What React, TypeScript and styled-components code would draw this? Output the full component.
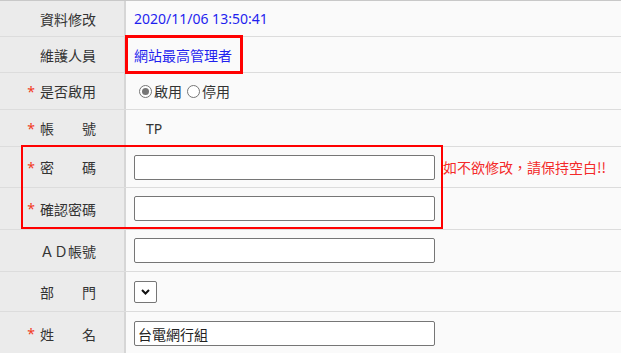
import React from 'react';
import styled, { createGlobalStyle } from 'styled-components';

const Global = createGlobalStyle`
  html, body { margin: 0; padding: 0; background: #fafafa; }
  body {
    font-family: "Noto Sans", "Noto Sans CJK TC", sans-serif;
    font-size: 14px;
    color: #333;
  }
  * { box-sizing: border-box; }
`;

const Page = styled.div`
  position: relative;
  width: 621px;
  height: 353px;
  overflow: hidden;
  background: #fafafa;
`;

const Form = styled.div`
  border-top: 1px solid #c8c8c8;
`;

const Row = styled.div<{ $h: number }>`
  display: grid;
  grid-template-columns: 126px 1fr;
  height: ${(p) => p.$h}px;
  border-bottom: 1px solid #dcdcdc;
`;

const Label = styled.div`
  display: flex;
  align-items: center;
  justify-content: flex-end;
  padding-right: 28px;
  background: #ebebeb;
  border-right: 2px solid #d6d6d6;
  font-family: "Noto Sans CJK TC", sans-serif;
  color: #333;
  white-space: pre;
`;

const Star = styled.span`
  color: #f23a1e;
  margin-right: 5px;
  font-family: "Noto Sans", sans-serif;
`;

const Value = styled.div`
  display: flex;
  align-items: center;
  padding-left: 8px;
  gap: 8px;
`;

const Link = styled.span`
  color: #1f1fef;
`;

const Plain = styled.span<{ $indent?: number }>`
  color: #333;
  margin-left: ${(p) => p.$indent ?? 0}px;
`;

const Hint = styled.span`
  color: #f42a2a;
  font-family: "Noto Sans CJK TC", sans-serif;
`;

const TextInput = styled.input`
  width: 301px;
  height: 25px;
  border: 1px solid #767676;
  border-radius: 2px;
  background: #fff;
  padding: 0 3px;
  font-family: "Noto Sans CJK TC", sans-serif;
  font-size: 14px;
  color: #222;
  outline: none;
`;

const RadioGroup = styled.label`
  display: flex;
  align-items: center;
  font-family: "Noto Sans CJK TC", sans-serif;
  color: #333;
`;

const Radio = styled.input`
  appearance: none;
  width: 13px;
  height: 13px;
  margin: 0 2px 0 5px;
  border: 1px solid #767676;
  border-radius: 50%;
  background: #fff;
  display: grid;
  place-items: center;
  &:checked::after {
    content: "";
    width: 7px;
    height: 7px;
    border-radius: 50%;
    background: #767676;
  }
`;

const SelectWrap = styled.div`
  position: relative;
  width: 23px;
  height: 22px;
`;

const Select = styled.select`
  appearance: none;
  width: 23px;
  height: 22px;
  border: 1px solid #767676;
  border-radius: 2px;
  background: #fff;
`;

const Chevron = styled.svg`
  position: absolute;
  left: 7px;
  top: 8px;
  pointer-events: none;
`;

const Mark = styled.div<{ $l: number; $t: number; $w: number; $h: number; $b: number }>`
  position: absolute;
  left: ${(p) => p.$l}px;
  top: ${(p) => p.$t}px;
  width: ${(p) => p.$w}px;
  height: ${(p) => p.$h}px;
  border: ${(p) => p.$b}px solid #ff0000;
  pointer-events: none;
`;

const FieldLabel: React.FC<{ required?: boolean; text: string }> = ({ required, text }) => (
  <Label>
    {required && <Star>*</Star>}
    {text}
  </Label>
);

export default function App() {
  return (
    <Page>
      <Global />
      <Form>
        <Row $h={36}>
          <FieldLabel text="資料修改" />
          <Value>
            <Link>2020/11/06 13:50:41</Link>
          </Value>
        </Row>
        <Row $h={36}>
          <FieldLabel text="維護人員" />
          <Value>
            <Link>網站最高管理者</Link>
          </Value>
        </Row>
        <Row $h={37}>
          <FieldLabel required text="是否啟用" />
          <Value>
            <RadioGroup>
              <Radio type="radio" name="enable" defaultChecked />
              啟用
            </RadioGroup>
            <RadioGroup style={{ marginLeft: -8 }}>
              <Radio type="radio" name="enable" />
              停用
            </RadioGroup>
          </Value>
        </Row>
        <Row $h={37}>
          <FieldLabel required text={'帳\u3000\u3000號'} />
          <Value>
            <Plain $indent={12}>TP</Plain>
          </Value>
        </Row>
        <Row $h={41}>
          <FieldLabel required text={'密\u3000\u3000碼'} />
          <Value>
            <TextInput type="password" />
            <Hint>如不欲修改，請保持空白!!</Hint>
          </Value>
        </Row>
        <Row $h={42}>
          <FieldLabel required text="確認密碼" />
          <Value>
            <TextInput type="password" />
          </Value>
        </Row>
        <Row $h={42}>
          <FieldLabel text="ＡＤ帳號" />
          <Value>
            <TextInput type="text" />
          </Value>
        </Row>
        <Row $h={40}>
          <FieldLabel text={'部\u3000\u3000門'} />
          <Value>
            <SelectWrap>
              <Select aria-label="部門" />
              <Chevron width="9" height="6" viewBox="0 0 9 6">
                <path d="M1 1 L4.5 4.5 L8 1" fill="none" stroke="#111" strokeWidth="2" />
              </Chevron>
            </SelectWrap>
          </Value>
        </Row>
        <Row $h={44}>
          <FieldLabel required text={'姓\u3000\u3000名'} />
          <Value>
            <TextInput type="text" defaultValue="台電網行組" />
          </Value>
        </Row>
      </Form>
      <Mark $l={125} $t={35} $w={118} $h={39} $b={3} />
      <Mark $l={21} $t={145} $w={422} $h={84} $b={2} />
    </Page>
  );
}
